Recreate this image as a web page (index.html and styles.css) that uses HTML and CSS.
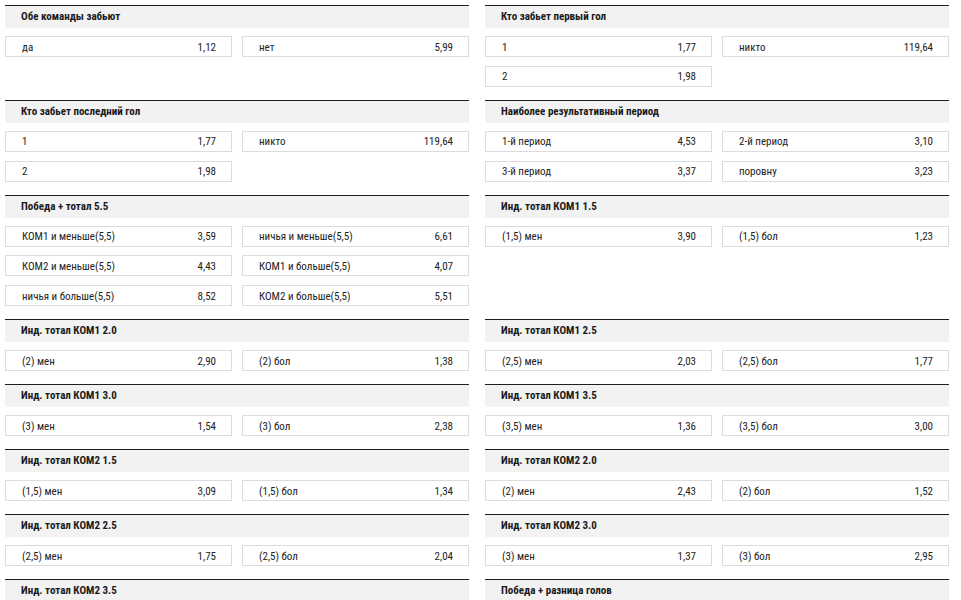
FILE: index.html
```html
<!DOCTYPE html>
<html lang="ru">
<head>
<meta charset="utf-8">
<link rel="stylesheet" href="styles.css">
</head>
<body>
<div class="markets">
  <section class="market">
    <h3 class="market-title">Обе команды забьют</h3>
    <div class="odds">
      <div class="odd"><span class="lbl">да</span><span class="val">1,12</span></div>
      <div class="odd"><span class="lbl">нет</span><span class="val">5,99</span></div>
    </div>
  </section>
  <section class="market">
    <h3 class="market-title">Кто забьет первый гол</h3>
    <div class="odds">
      <div class="odd"><span class="lbl">1</span><span class="val">1,77</span></div>
      <div class="odd"><span class="lbl">никто</span><span class="val">119,64</span></div>
      <div class="odd"><span class="lbl">2</span><span class="val">1,98</span></div>
    </div>
  </section>

  <section class="market">
    <h3 class="market-title">Кто забьет последний гол</h3>
    <div class="odds">
      <div class="odd"><span class="lbl">1</span><span class="val">1,77</span></div>
      <div class="odd"><span class="lbl">никто</span><span class="val">119,64</span></div>
      <div class="odd"><span class="lbl">2</span><span class="val">1,98</span></div>
    </div>
  </section>
  <section class="market">
    <h3 class="market-title">Наиболее результативный период</h3>
    <div class="odds">
      <div class="odd"><span class="lbl">1-й период</span><span class="val">4,53</span></div>
      <div class="odd"><span class="lbl">2-й период</span><span class="val">3,10</span></div>
      <div class="odd"><span class="lbl">3-й период</span><span class="val">3,37</span></div>
      <div class="odd"><span class="lbl">поровну</span><span class="val">3,23</span></div>
    </div>
  </section>

  <section class="market">
    <h3 class="market-title">Победа + тотал 5.5</h3>
    <div class="odds">
      <div class="odd"><span class="lbl">КОМ1 и меньше(5,5)</span><span class="val">3,59</span></div>
      <div class="odd"><span class="lbl">ничья и меньше(5,5)</span><span class="val">6,61</span></div>
      <div class="odd"><span class="lbl">КОМ2 и меньше(5,5)</span><span class="val">4,43</span></div>
      <div class="odd"><span class="lbl">КОМ1 и больше(5,5)</span><span class="val">4,07</span></div>
      <div class="odd"><span class="lbl">ничья и больше(5,5)</span><span class="val">8,52</span></div>
      <div class="odd"><span class="lbl">КОМ2 и больше(5,5)</span><span class="val">5,51</span></div>
    </div>
  </section>
  <section class="market">
    <h3 class="market-title">Инд. тотал КОМ1 1.5</h3>
    <div class="odds">
      <div class="odd"><span class="lbl">(1,5) мен</span><span class="val">3,90</span></div>
      <div class="odd"><span class="lbl">(1,5) бол</span><span class="val">1,23</span></div>
    </div>
  </section>

  <section class="market">
    <h3 class="market-title">Инд. тотал КОМ1 2.0</h3>
    <div class="odds">
      <div class="odd"><span class="lbl">(2) мен</span><span class="val">2,90</span></div>
      <div class="odd"><span class="lbl">(2) бол</span><span class="val">1,38</span></div>
    </div>
  </section>
  <section class="market">
    <h3 class="market-title">Инд. тотал КОМ1 2.5</h3>
    <div class="odds">
      <div class="odd"><span class="lbl">(2,5) мен</span><span class="val">2,03</span></div>
      <div class="odd"><span class="lbl">(2,5) бол</span><span class="val">1,77</span></div>
    </div>
  </section>

  <section class="market">
    <h3 class="market-title">Инд. тотал КОМ1 3.0</h3>
    <div class="odds">
      <div class="odd"><span class="lbl">(3) мен</span><span class="val">1,54</span></div>
      <div class="odd"><span class="lbl">(3) бол</span><span class="val">2,38</span></div>
    </div>
  </section>
  <section class="market">
    <h3 class="market-title">Инд. тотал КОМ1 3.5</h3>
    <div class="odds">
      <div class="odd"><span class="lbl">(3,5) мен</span><span class="val">1,36</span></div>
      <div class="odd"><span class="lbl">(3,5) бол</span><span class="val">3,00</span></div>
    </div>
  </section>

  <section class="market">
    <h3 class="market-title">Инд. тотал КОМ2 1.5</h3>
    <div class="odds">
      <div class="odd"><span class="lbl">(1,5) мен</span><span class="val">3,09</span></div>
      <div class="odd"><span class="lbl">(1,5) бол</span><span class="val">1,34</span></div>
    </div>
  </section>
  <section class="market">
    <h3 class="market-title">Инд. тотал КОМ2 2.0</h3>
    <div class="odds">
      <div class="odd"><span class="lbl">(2) мен</span><span class="val">2,43</span></div>
      <div class="odd"><span class="lbl">(2) бол</span><span class="val">1,52</span></div>
    </div>
  </section>

  <section class="market">
    <h3 class="market-title">Инд. тотал КОМ2 2.5</h3>
    <div class="odds">
      <div class="odd"><span class="lbl">(2,5) мен</span><span class="val">1,75</span></div>
      <div class="odd"><span class="lbl">(2,5) бол</span><span class="val">2,04</span></div>
    </div>
  </section>
  <section class="market">
    <h3 class="market-title">Инд. тотал КОМ2 3.0</h3>
    <div class="odds">
      <div class="odd"><span class="lbl">(3) мен</span><span class="val">1,37</span></div>
      <div class="odd"><span class="lbl">(3) бол</span><span class="val">2,95</span></div>
    </div>
  </section>

  <section class="market">
    <h3 class="market-title">Инд. тотал КОМ2 3.5</h3>
    <div class="odds">
      <div class="odd"><span class="lbl">(3,5) мен</span><span class="val">1,28</span></div>
      <div class="odd"><span class="lbl">(3,5) бол</span><span class="val">3,45</span></div>
    </div>
  </section>
  <section class="market">
    <h3 class="market-title">Победа + разница голов</h3>
    <div class="odds">
      <div class="odd"><span class="lbl">КОМ1 с разницей 1</span><span class="val">4,60</span></div>
      <div class="odd"><span class="lbl">КОМ2 с разницей 1</span><span class="val">5,10</span></div>
    </div>
  </section>
</div>
</body>
</html>
```
FILE: styles.css
```css
html, body {
  margin: 0;
  padding: 0;
  background: #ffffff;
}

body {
  padding: 5px 0 0 5px;
  font-family: "Roboto Condensed", "Liberation Sans Narrow", Roboto, "Liberation Sans", sans-serif;
  font-stretch: condensed;
  color: #222222;
}

.markets {
  width: 944px;
  display: grid;
  grid-template-columns: 464px 464px;
  column-gap: 16px;
}

.market {
  border-top: 1px solid #1e1e1e;
  padding-bottom: 13px;
}

.market-title {
  margin: 0;
  height: 22px;
  line-height: 22px;
  background: #f2f2f2;
  padding-left: 16px;
  font-size: 11px;
  font-weight: bold;
  color: #1a1a1a;
}

.odds {
  margin-top: 8px;
  display: grid;
  grid-template-columns: 1fr 1fr;
  column-gap: 10px;
  row-gap: 8.75px;
}

.odd {
  height: 18px;
  padding: 1px 15px 0 16px;
  border: 1px solid #dcdcdc;
  display: flex;
  align-items: center;
  justify-content: space-between;
  font-size: 11px;
  color: #222222;
}
```
